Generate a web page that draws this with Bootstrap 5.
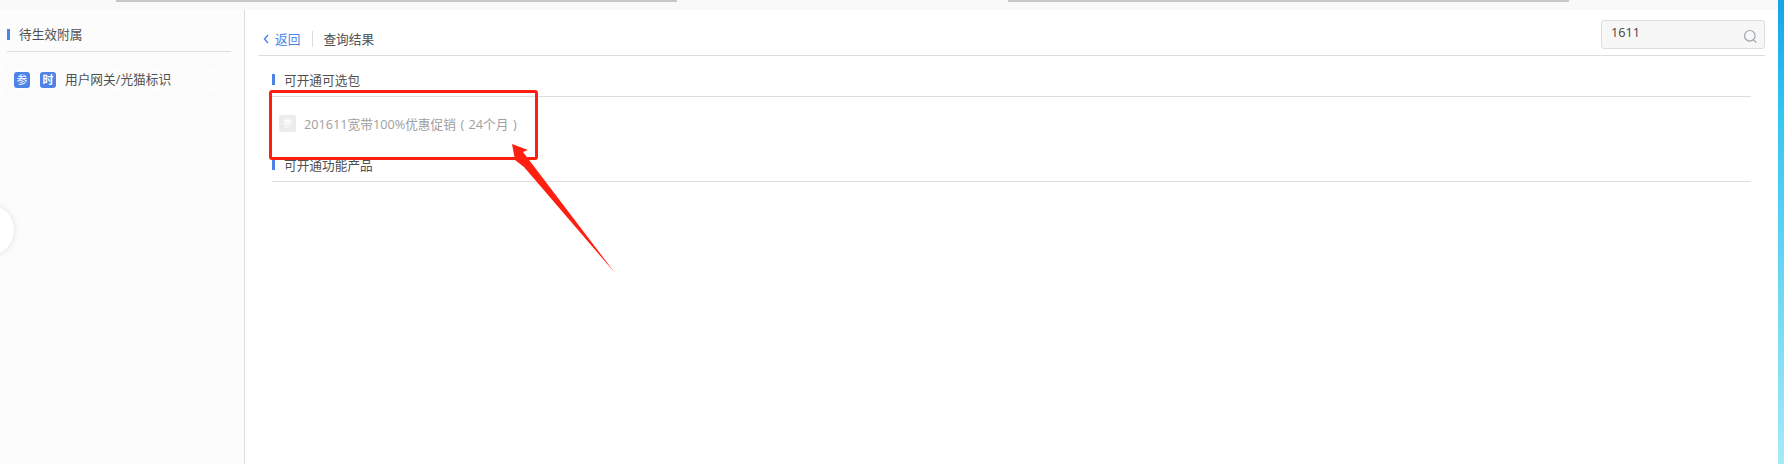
<!DOCTYPE html>
<html lang="zh">
<head>
<meta charset="utf-8">
<link href="https://cdn.jsdelivr.net/npm/bootstrap@5.3.0/dist/css/bootstrap.min.css" rel="stylesheet">
<style>
html,body{height:100%;overflow:hidden}
body{font-family:"Open Sans","Noto Sans CJK SC",sans-serif;font-size:12.7px;color:#505050;background:linear-gradient(180deg,#16a3e8 0%,#36c6f0 25%,#a6e9f8 100%);position:relative}
.page-shell{width:1778px;height:464px;background:#fff}
.top-strip{height:10px;background:#f9f9f9}
.strip-line{height:2px;background:#c8c8c8}
.strip-a{margin-left:116px;width:561px}
.strip-b{margin-left:331px;width:561px}
.side-pane{width:245px;height:454px;background:#fcfcfc;border-right:1px solid #ddd;padding:0 13px 0 7px}
.side-head{height:42px;border-bottom:1px solid #ddd;padding-top:7px;line-height:18px;gap:9px}
.tick{display:inline-block;width:3px;height:11px;background:#4d82e6}
.side-row{margin-top:12px;height:32px;margin-left:-1px;border:1px dashed #f8f8f8;padding-left:7px}
.tag-ico{width:16px;height:16px;border-radius:3px;background:#4d82e6;color:#fff;font-size:11px;line-height:16px;text-align:center}
.tag-next{margin-left:10px}
.side-label{margin-left:9px}
.main-pane{height:454px;padding:0 13px 0 14px}
.result-bar{height:46px;border-bottom:1px solid #ddd;padding-bottom:5px}
.back-link{color:#4d82e6;text-decoration:none;margin-bottom:1px}
.back-chev{margin-left:4px;margin-right:5px}
.bar-sep{width:1px;height:16px;background:#ddd;margin:0 10px 3px 12px}
.bar-title{margin-bottom:1px}
.find-box{width:164px;height:29px;background:#f7f7f7;border:1px solid #ddd;border-radius:3px;padding:0 6px 0 9px;margin-bottom:1px;color:#444}
.find-val{line-height:23px}
.group-head{margin:0 14px 0 13px;border-bottom:1px solid #ddd;line-height:18px;gap:9px}
.group-one{height:41px;padding-top:7px}
.group-two{height:26px;padding-bottom:8px}
.offer-row{height:59px;margin-left:20px;padding-bottom:6px;color:#a0a0a0}
.offer-ico{width:17px;height:17px;border-radius:2px;background:#ececec;color:#fff;font-size:10px;line-height:17px;text-align:center}
.offer-txt{position:relative;top:1px}
.paren-mark{display:inline-block;width:1em;text-align:center}
.red-frame{position:absolute;left:269px;top:90px;width:269px;height:70px;border:3px solid #ff1f10;border-radius:3px}
.red-arrow{position:absolute;left:500px;top:135px}
.edge-knob{position:absolute;left:-38px;top:204px;width:52px;height:52px;border-radius:50%;background:#fff;box-shadow:0 0 6px rgba(0,0,0,.12)}
</style>
</head>
<body>
<div class="page-shell">
  <div class="top-strip d-flex">
    <div class="strip-line strip-a"></div>
    <div class="strip-line strip-b"></div>
  </div>
  <div class="d-flex">
    <aside class="side-pane flex-shrink-0">
      <div class="side-head d-flex align-items-center"><span class="tick"></span><span>待生效附属</span></div>
      <div class="side-row d-flex align-items-center">
        <span class="tag-ico flex-shrink-0">参</span>
        <span class="tag-ico tag-next flex-shrink-0 fw-bold">时</span>
        <span class="side-label">用户网关/光猫标识</span>
      </div>
    </aside>
    <main class="main-pane flex-grow-1">
      <div class="result-bar d-flex align-items-end">
        <a class="back-link d-flex align-items-center" href="#">
          <svg width="7" height="10" viewBox="0 0 7 10" class="back-chev"><path d="M5 1 1.5 5 5 9" fill="none" stroke="#4d82e6" stroke-width="1.4"/></svg>
          <span>返回</span>
        </a>
        <span class="bar-sep"></span>
        <span class="bar-title">查询结果</span>
        <div class="find-box ms-auto d-flex justify-content-between">
          <span class="find-val">1611</span>
          <svg width="15" height="15" viewBox="0 0 15 15" class="align-self-end mb-1"><circle cx="6.8" cy="6.8" r="5.3" fill="none" stroke="#9aa5ad" stroke-width="1.2"/><path d="m10.6 10.8 2.8 2.8" stroke="#9aa5ad" stroke-width="1.2"/></svg>
        </div>
      </div>
      <div class="group-head group-one d-flex align-items-center"><span class="tick"></span><span>可开通可选包</span></div>
      <div class="offer-row d-flex align-items-center">
        <span class="offer-ico flex-shrink-0">参</span>
        <span class="ms-2 offer-txt">201611宽带100%优惠促销<span class="paren-mark">(</span>24个月<span class="paren-mark">)</span></span>
      </div>
      <div class="group-head group-two d-flex align-items-center"><span class="tick"></span><span>可开通功能产品</span></div>
    </main>
  </div>
</div>
<div class="edge-knob"></div>
<div class="red-frame"></div>
<svg class="red-arrow" width="120" height="142" viewBox="0 0 120 142"><polygon points="12,9 28,15 23,17 115,138 24,32 15,25" fill="#ff1f10"/></svg>
<script src="https://cdn.jsdelivr.net/npm/bootstrap@5.3.0/dist/js/bootstrap.bundle.min.js"></script>
</body>
</html>
